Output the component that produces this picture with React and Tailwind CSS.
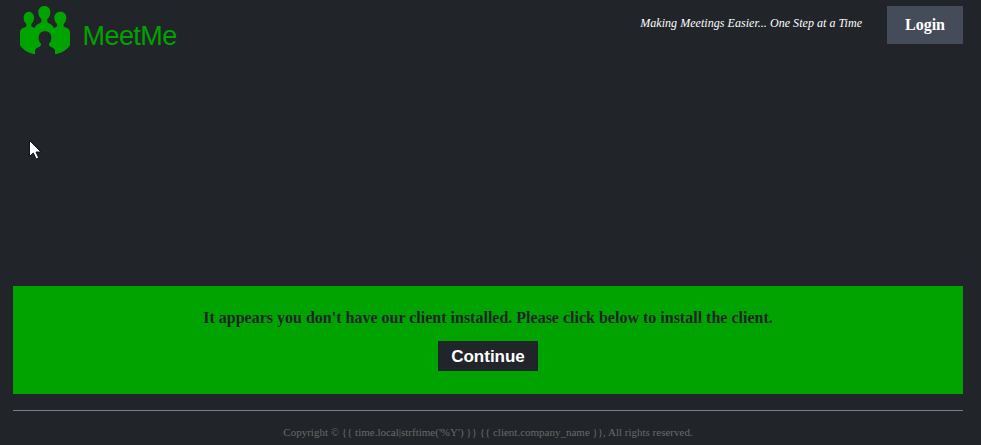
function Logo() {
  return (
    <svg className="h-[50px] w-[50px] shrink-0" viewBox="30 18 150 150" aria-label="MeetMe">
      <g fill="#00a300">
        <path d="M58 35c-11 0-17 8-17 18c0 8 3 14 8 19c1 4 0 7-2 9c-10 3-17 7-17 16v38c8 14 25 25 45 28v-13c3-5 8-8 14-10l4-4v-5c-5-4-7-10-7-17c0-13 7-20 19-20s19 7 19 20c0 7-2 13-7 17v5l4 4c6 2 11 5 14 10v13c20-3 37-14 45-28V97c0-9-7-13-17-16c-2-2-3-5-2-9c5-5 8-11 8-19c0-10-7-18-18-18s-18 8-18 18c0 8 3 14 8 19c1 4 0 7-2 9l-7 3c-4-8-10-13-18-16c-3-3-3-7-2-11c6-4 9-12 9-20c0-11-7-19-18-19s-18 8-18 19c0 8 3 16 9 20c1 4 1 8-2 11c-9 3-15 8-19 16l-7-3c-2-2-3-5-2-9c5-5 8-11 8-19c0-10-6-18-17-18z" />
      </g>
    </svg>
  );
}

function Pointer() {
  return (
    <svg className="absolute left-[28px] top-[139px] h-[21px] w-[14px]" viewBox="0 0 14 21" aria-hidden="true">
      <path d="M1.5 1.5v16l3.8-3.5 2.9 6 2.5-1.2-2.7-5.8h5z" fill="#fff" stroke="#11131d" strokeWidth="1" />
    </svg>
  );
}

export default function App() {
  return (
    <div className="relative flex h-[445px] w-full flex-col overflow-hidden bg-[#212529] pl-[13px] pr-[18px] font-['Liberation_Serif',serif]">
      <header className="flex h-[286px] shrink-0 items-start justify-between pl-[7px] pt-[6px]">
        <div className="flex items-start">
          <Logo />
          <span className="ml-[12.5px] mt-[15px] font-['Liberation_Sans',sans-serif] text-[27px] leading-[30px] tracking-[-0.55px] text-[#00a300]">MeetMe</span>
        </div>
        <div className="flex items-start">
          <span className="mr-[25px] mt-[8px] whitespace-nowrap text-[12px] italic leading-[18px] tracking-[0.04px] text-white">Making Meetings Easier... One Step at a Time</span>
          <button className="h-[38px] w-[76px] bg-[#444b59] text-base font-bold text-white">Login</button>
        </div>
      </header>
      <main className="flex h-[108px] shrink-0 flex-col items-center bg-[#00a300] pt-[20px]">
        <p className="whitespace-nowrap text-base font-bold leading-6 text-[#212529]">It appears you don't have our client installed. Please click below to install the client.</p>
        <button className="mt-[11px] h-[30px] w-[100px] bg-[#212529] pt-px font-['Liberation_Sans',sans-serif] text-[17px] font-bold leading-[29px] text-white">Continue</button>
      </main>
      <hr className="mt-4 shrink-0 border-t border-[#708090]" />
      <footer className="mt-[13px] whitespace-nowrap text-center text-[11px] leading-4 text-[#696969]">
        {"Copyright © {{ time.local|strftime('%Y') }} {{ client.company_name }}, All rights reserved."}
      </footer>
      <Pointer />
    </div>
  );
}
